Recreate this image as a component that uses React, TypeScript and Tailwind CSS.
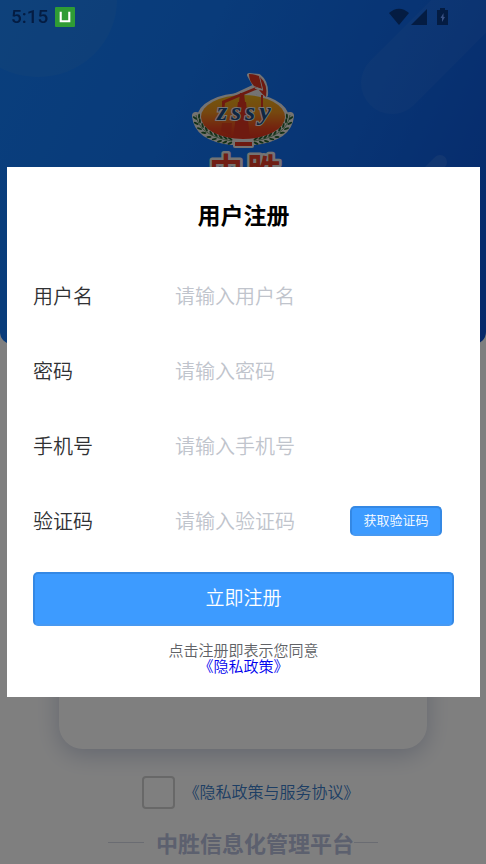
import { useState } from "react";

interface Field {
  id: string;
  label: string;
  placeholder: string;
  type: string;
}

const FIELDS: Field[] = [
  { id: "username", label: "用户名", placeholder: "请输入用户名", type: "text" },
  { id: "password", label: "密码", placeholder: "请输入密码", type: "password" },
  { id: "phone", label: "手机号", placeholder: "请输入手机号", type: "tel" },
  { id: "code", label: "验证码", placeholder: "请输入验证码", type: "text" },
];

// position and rotation of each leaf on the left laurel branch
const LEAVES = [
  [5, 43, 65],
  [6, 48, 55],
  [9, 53, 45],
  [13, 57, 35],
  [18, 61, 28],
  [23, 63, 20],
  [28, 65, 14],
  [33, 66, 8],
  [38, 67, 4],
];

function Laurel() {
  return (
    <g>
      <path d="M4 42 Q6 63 40 67" fill="none" stroke="#e8e6e0" strokeWidth="8" strokeLinecap="round" />
      <path d="M4 41 Q7 62 40 67" fill="none" stroke="#3f7a3a" strokeWidth="0.7" />
      {LEAVES.map(([x, y, angle]) => (
        <g key={x} transform={`translate(${x} ${y}) rotate(${angle})`} fill="#24602e">
          <ellipse cx="-1" cy="-2" rx="2.6" ry="1" transform="rotate(28)" />
          <ellipse cx="-1" cy="2" rx="2.6" ry="1" transform="rotate(-28)" />
        </g>
      ))}
    </g>
  );
}

function Logo() {
  return (
    <svg aria-label="中胜" className="h-[120px] w-[102px]" role="img" viewBox="0 0 102 120">
      <defs>
        <linearGradient id="oval" x1="0" x2="0" y1="0" y2="1">
          <stop offset="0" stopColor="#e8b01c" />
          <stop offset="0.4" stopColor="#ec8e1e" />
          <stop offset="0.75" stopColor="#e8481e" />
          <stop offset="1" stopColor="#e0301c" />
        </linearGradient>
      </defs>
      <g fill="#e8e6e6" stroke="#e8e6e6" strokeLinejoin="round" strokeWidth="4">
        <ellipse cx="51" cy="46" rx="44" ry="23" />
        <path d="M57 3 L67 4 Q75 10 74 23 L70 26 L65 20 L35 32 L33 28 L63 14 Z" />
        <path d="M43 70 H60 V74 H43 Z" />
      </g>
      <g transform="translate(0 2)">
        <Laurel />
      </g>
      <g transform="translate(102 2) scale(-1 1)">
        <Laurel />
      </g>
      <ellipse cx="51" cy="45" rx="42" ry="22" fill="url(#oval)" />
      <g fill="#dc3420">
        <path d="M57 2 Q62 2 67 4 L70 17 L62 14 Q57 9 57 2 Z" />
        <path d="M68 5 Q76 12 74 25 Q70 22 67 18 L71 17 Z" />
        <path d="M30 29 L64 15 L66 17 L33 31 L32 40 H30 Z" />
        <path d="M48 21 H52 L53 30 H54 L58 66 H41 L46 30 H47 Z" />
        <rect x="69" y="23" width="2" height="17" />
        <path d="M30 51 H40 L39 63 L29 59 Z" opacity="0.6" />
        <rect x="43" y="70" width="17" height="4" />
      </g>
      <path d="M63 16 L71 18" stroke="#e8e6e6" strokeWidth="1.5" />
      <text
        x="30 44 58 73"
        y="48"
        className="font-['Liberation_Serif',serif] text-[26px] font-bold italic"
        fill="#1c4c84"
        stroke="#f0ecea"
        strokeWidth="2"
        paintOrder="stroke"
        textAnchor="middle"
      >
        zssy
      </text>
      <text
        x="34 72"
        y="111"
        className="font-['Noto_Sans_CJK_SC',sans-serif] text-[34px] font-bold"
        fill="#e03c28"
        stroke="#e8e6e6"
        strokeWidth="5"
        strokeLinejoin="round"
        paintOrder="stroke"
        textAnchor="middle"
      >
        中胜
      </text>
    </svg>
  );
}

function StatusBar() {
  return (
    <div className="fixed inset-x-0 top-0 z-20 flex h-[33px] items-center pr-9 pl-[11px] text-[#041c42]">
      <span className="font-[Roboto,sans-serif] text-[19px] leading-8 font-medium">5:15</span>
      <svg aria-hidden="true" className="ml-[7px] size-5" viewBox="0 0 21 21">
        <rect width="21" height="21" rx="1" fill="#2f9c35" />
        <path d="M6 5 V15 H15 V5" fill="none" stroke="#fff" strokeWidth="2.2" />
      </svg>
      <svg aria-hidden="true" className="ml-auto h-[18px] w-[61px]" viewBox="0 0 61 18" fill="currentColor">
        <path d="M0 5 Q10 -3.500 20 5 L10 17 Z" />
        <path d="M38 1 V17 H22 Z" />
        <path d="M51 0 H56 V2 H59 V17 H48 V2 H51 Z" />
        <path d="M54.500 5 L51.500 10 H53 V14 L56 9 H54.500 Z" fill="#3a5284" />
      </svg>
    </div>
  );
}

function LoginPage() {
  const [agreed, setAgreed] = useState(false);

  return (
    <div className="min-h-screen bg-white">
      <header className="relative flex h-[344px] justify-center overflow-hidden rounded-b-xl bg-linear-[115deg,#147efa_0%,#1276f4_35%,#1068e8_65%,#0c52d4_100%] pt-[72px]">
        <svg aria-hidden="true" className="absolute top-0 left-0 h-full w-full" preserveAspectRatio="xMidYMin slice" viewBox="0 0 486 344">
          <ellipse cx="38" cy="0" rx="79" ry="77" fill="#bfe0c0" opacity="0.06" />
          <path d="M392 83 L490 -15" stroke="#fff" strokeLinecap="round" strokeWidth="62" opacity="0.04" />
          <path d="M440 162 L380 222" stroke="#fff" strokeLinecap="round" strokeWidth="14" opacity="0.09" />
        </svg>
        <div className="relative">
          <Logo />
        </div>
      </header>

      <section className="relative mx-[59px] -mt-20 h-[485px] rounded-3xl bg-white shadow-[0_6px_24px_#c8cede]" />

      <div className="mt-[27px] flex items-center justify-center gap-4 pl-2">
        <input
          aria-label="同意协议"
          checked={agreed}
          className="size-[33px] appearance-none rounded border-2 border-[#d0d0d0] checked:bg-[#409eff]"
          id="agreement"
          onChange={(event) => setAgreed(event.target.checked)}
          type="checkbox"
        />
        <a className="pb-1 text-base text-[#3a7cc8] [font-feature-settings:'palt'_1]" href="#agreement">《隐私政策与服务协议》</a>
      </div>

      <footer className="mt-[17px] flex items-center justify-center gap-3 pb-1">
        <span className="h-px w-9 bg-[#d4d8e4]" />
        <span className="flex items-center">
          <span className="text-[22px] leading-8 font-bold text-[#b8c0dc]">中胜信息化管理平台</span>
          <span className="h-px w-6 bg-[#d4d8e4]" />
        </span>
      </footer>
    </div>
  );
}

function RegisterDialog() {
  return (
    <div className="fixed inset-0 z-10 bg-black/50 pt-[167px] pr-[6px] pl-[7px]">
      <section aria-labelledby="registerTitle" aria-modal="true" className="bg-white px-[26px] pt-[30px] pb-[23px]" role="dialog">
        <h2 className="mb-[27px] text-center text-[23px] leading-[34px] font-bold text-black" id="registerTitle">用户注册</h2>

        <form onSubmit={(event) => event.preventDefault()}>
          {FIELDS.map((field) => (
            <div className="flex h-[75px] items-center pr-3" key={field.id}>
              <label className="w-[142px] shrink-0 text-xl text-[#303133]" htmlFor={field.id}>{field.label}</label>
              <input
                className="min-w-0 flex-1 text-xl text-[#303133] outline-none placeholder:text-[#c0c4cc]"
                id={field.id}
                placeholder={field.placeholder}
                type={field.type}
              />
              {field.id === "code" ? (
                <button
                  className="h-[30px] w-[92px] shrink-0 rounded-[5px] border-2 border-[#3488e4] border-b-[#4799f2] bg-[#3d9bff] pb-0.5 text-[13px] leading-5 text-white"
                  type="button"
                >
                  获取验证码
                </button>
              ) : null}
            </div>
          ))}

          <button
            className="mt-[14px] h-[54px] w-full rounded-[5px] border-2 border-[#3488e4] border-b-[#4799f2] bg-[#3d9bff] pb-1 text-[19px] text-white"
            type="submit"
          >
            立即注册
          </button>
        </form>

        <p className="mt-4 text-center text-[15px] leading-4 text-[#606266]">
          点击注册即表示您同意
          <a className="block text-[#0000ee]" href="#privacy">《隐私政策》</a>
        </p>
      </section>
    </div>
  );
}

export default function App() {
  return (
    <main className="font-['Noto_Sans_CJK_SC',sans-serif] font-[350]" lang="zh-CN">
      <LoginPage />
      <RegisterDialog />
      <StatusBar />
    </main>
  );
}
